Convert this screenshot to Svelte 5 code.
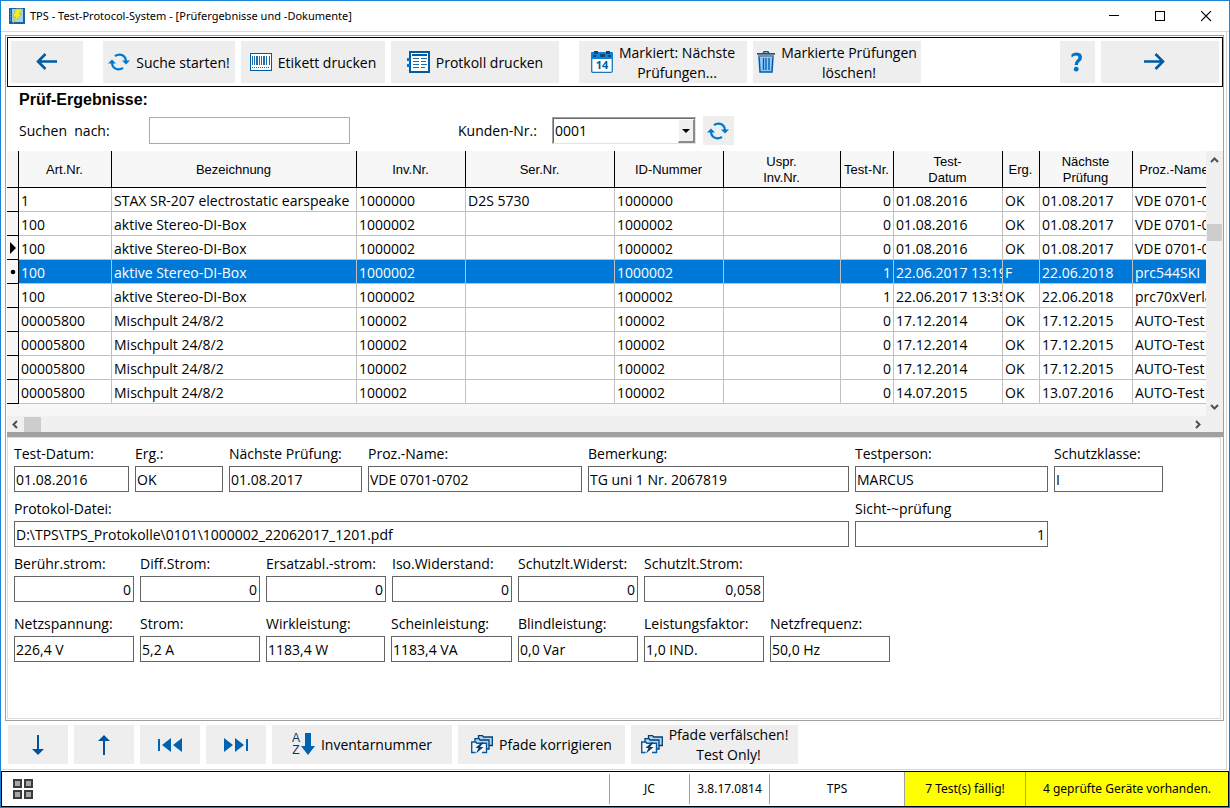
<script>
  const columns = [
    { lines: ['Art.Nr.'], width: 93 },
    { lines: ['Bezeichnung'], width: 245 },
    { lines: ['Inv.Nr.'], width: 109 },
    { lines: ['Ser.Nr.'], width: 149 },
    { lines: ['ID-Nummer'], width: 109 },
    { lines: ['Uspr.', 'Inv.Nr.'], width: 117 },
    { lines: ['Test-Nr.'], width: 53 },
    { lines: ['Test-', 'Datum'], width: 109 },
    { lines: ['Erg.'], width: 37 },
    { lines: ['Nächste', 'Prüfung'], width: 93 },
    { lines: ['Proz.-Name'], width: 84 }
  ];

  const rows = [
    ['1', 'STAX SR-207 electrostatic earspeake', '1000000', 'D2S 5730', '1000000', '', '0', '01.08.2016', 'OK', '01.08.2017', 'VDE 0701-0702'],
    ['100', 'aktive Stereo-DI-Box', '1000002', '', '1000002', '', '0', '01.08.2016', 'OK', '01.08.2017', 'VDE 0701-0702'],
    ['100', 'aktive Stereo-DI-Box', '1000002', '', '1000002', '', '0', '01.08.2016', 'OK', '01.08.2017', 'VDE 0701-0702'],
    ['100', 'aktive Stereo-DI-Box', '1000002', '', '1000002', '', '1', '22.06.2017 13:19', 'F', '22.06.2018', 'prc544SKI'],
    ['100', 'aktive Stereo-DI-Box', '1000002', '', '1000002', '', '1', '22.06.2017 13:35', 'OK', '22.06.2018', 'prc70xVerlä'],
    ['00005800', 'Mischpult 24/8/2', '100002', '', '100002', '', '0', '17.12.2014', 'OK', '17.12.2015', 'AUTO-Test'],
    ['00005800', 'Mischpult 24/8/2', '100002', '', '100002', '', '0', '17.12.2014', 'OK', '17.12.2015', 'AUTO-Test'],
    ['00005800', 'Mischpult 24/8/2', '100002', '', '100002', '', '0', '17.12.2014', 'OK', '17.12.2015', 'AUTO-Test'],
    ['00005800', 'Mischpult 24/8/2', '100002', '', '100002', '', '0', '14.07.2015', 'OK', '13.07.2016', 'AUTO-Test']
  ];
  const current = 2;
  const selected = 3;

  const fieldRows = [
    [
      { label: 'Test-Datum:', value: '01.08.2016', width: 115 },
      { label: 'Erg.:', value: 'OK', width: 88 },
      { label: 'Nächste Prüfung:', value: '01.08.2017', width: 133 },
      { label: 'Proz.-Name:', value: 'VDE 0701-0702', width: 214 },
      { label: 'Bemerkung:', value: 'TG uni 1 Nr. 2067819', width: 261 },
      { label: 'Testperson:', value: 'MARCUS', width: 193 },
      { label: 'Schutzklasse:', value: 'I', width: 109 }
    ],
    [
      { label: 'Protokol-Datei:', value: 'D:\\TPS\\TPS_Protokolle\\0101\\1000002_22062017_1201.pdf', width: 835 },
      { label: 'Sicht-~prüfung', value: '1', width: 193, number: true }
    ],
    [
      { label: 'Berühr.strom:', value: '0', width: 120, number: true },
      { label: 'Diff.Strom:', value: '0', width: 120, number: true },
      { label: 'Ersatzabl.-strom:', value: '0', width: 120, number: true },
      { label: 'Iso.Widerstand:', value: '0', width: 120, number: true },
      { label: 'Schutzlt.Widerst:', value: '0', width: 120, number: true },
      { label: 'Schutzlt.Strom:', value: '0,058', width: 120, number: true }
    ],
    [
      { label: 'Netzspannung:', value: '226,4 V', width: 120 },
      { label: 'Strom:', value: '5,2 A', width: 120 },
      { label: 'Wirkleistung:', value: '1183,4 W', width: 119 },
      { label: 'Scheinleistung:', value: '1183,4 VA', width: 121 },
      { label: 'Blindleistung:', value: '0,0 Var', width: 120 },
      { label: 'Leistungsfaktor:', value: '1,0 IND.', width: 120 },
      { label: 'Netzfrequenz:', value: '50,0 Hz', width: 120 }
    ]
  ];
</script>

{#snippet refreshIcon()}
  <svg width="22" height="18" viewBox="0 0 22 18" aria-hidden="true">
    <path d="M7 3.200Q9 1.600 12 1.700 17.800 2.500 18 8.500M15 14.800Q13 16.400 10 16.300 4.200 15.500 4 9.500" fill="none" stroke="#0078d0" stroke-width="2.200" />
    <path d="M14 7.500h8L18 11.500zM8 10.500H0L4 6.500z" fill="#0078d0" />
  </svg>
{/snippet}

{#snippet foldersIcon()}
  <svg width="22" height="19" viewBox="0 0 22 19" aria-hidden="true">
    <path d="M7.500 5V.700h4l1 1.300h8.800v8.500H18" fill="#b9d6ee" stroke="#003e73" stroke-width="1.300" />
    <path d="M4 8V3.700h4l1 1.300h9v9h-2.500" fill="#b9d6ee" stroke="#003e73" stroke-width="1.300" />
    <path d="M4.500 17.500H.7V7h4l1 1.200h9.800v9.300H11" fill="#f4f6f8" stroke="#005ba5" stroke-width="1.400" />
    <path d="M10.500 7.500L4.500 13h3l-2.500 5.500 7.500-6.500H9l3.500-4.500z" fill="#003e73" />
  </svg>
{/snippet}

<div class="window">
  <header class="titlebar">
    <svg width="16" height="16" viewBox="0 0 16 16" aria-hidden="true">
      <path d="M0 0h16v16H0z" fill="#1464a5" />
      <path d="M3 1h11v13H3z" fill="#a5d0ea" />
      <path d="M1 3h1M1 6h1M1 9h1M1 12h1" stroke="#8fc4e8" />
      <path d="M7 1h6l-3 5h3L4 15l3-6H4z" fill="#f5ee1d" stroke="#b2b637" stroke-width=".6" />
    </svg>
    <span class="title">TPS - Test-Protocol-System - [Prüfergebnisse und -Dokumente]</span>
    <button class="winbtn" aria-label="Minimieren"><svg width="11" height="11" shape-rendering="crispEdges"><path d="M0 4.500h10" stroke="#000" /></svg></button>
    <button class="winbtn" aria-label="Maximieren"><svg width="11" height="11" shape-rendering="crispEdges"><path d="M.5.500h9v9h-9z" fill="none" stroke="#000" /></svg></button>
    <button class="winbtn" aria-label="Schließen"><svg width="11" height="11"><path d="M0 0l10 10M10 0L0 10" stroke="#000" stroke-width="1.100" /></svg></button>
  </header>

  <div class="client">
    <main class="form">
      <nav class="toolbar">
        <button class="tool back" aria-label="Zurück">
          <svg width="22" height="18" viewBox="0 0 22 18"><path d="M9.500 1L2 8.500l7.500 7.500M2 8.500h19" fill="none" stroke="#005ba5" stroke-width="2.600" /></svg>
        </button>
        <button class="tool search">{@render refreshIcon()}<span>Suche starten!</span></button>
        <button class="tool label">
          <svg width="22" height="18" viewBox="0 0 22 18" shape-rendering="crispEdges" aria-hidden="true">
            <path d="M.5.500h21v17H.5z" fill="#fff" stroke="#005ba5" />
            <path d="M2.500 3v9M4.500 3v9M7.500 3v9M9.500 3v9M11.500 3v9M14.500 3v9M16.500 3v9M19.500 3v9" stroke="#1c6db0" />
            <path d="M6.500 3v9M13.500 3v9" stroke="#1c6db0" />
            <path d="M2 14.500h18" stroke="#3d5f7c" stroke-dasharray="1 1" />
          </svg>
          <span>Etikett drucken</span>
        </button>
        <button class="tool wide">
          <svg width="23" height="22" viewBox="0 0 23 22" shape-rendering="crispEdges" aria-hidden="true">
            <path d="M3 1h19v20H3z" fill="#fff" stroke="#005ba5" stroke-width="2" />
            <path d="M5 3h15v2H5z" fill="#005ba5" />
            <path d="M6 7.500h6M14 7.500h6M6 10.500h6M14 10.500h5M6 13.500h6M14 13.500h6M6 16.500h6M14 16.500h4" stroke="#1c6db0" />
            <path d="M0 7h3v3H0zM0 13h3v3H0z" fill="#0078d0" />
          </svg>
          <span>Protkoll drucken</span>
        </button>
        <button class="tool wide spaced">
          <svg width="22" height="22" viewBox="0 0 22 22" aria-hidden="true">
            <path d="M.700 7h20.600v13q0 1.300-1.300 1.300H2Q.700 21.300.700 20z" fill="#fff" stroke="#1c76bd" stroke-width="1.300" />
            <path d="M1 1h20q1 0 1 1v6H0V2q0-1 1-1z" fill="#0a83dc" />
            <path d="M3 0h4v3H3zM15 0h4v3h-4zM9 3h5v3H9zM2 4h3v2H2zM17 4h3v2h-3z" fill="#1d4468" />
            <text x="11" y="18" text-anchor="middle" font-size="11" font-weight="700" fill="#005ba5">14</text>
          </svg>
          <span>Markiert: Nächste<br />Prüfungen...</span>
        </button>
        <button class="tool wide">
          <svg width="18" height="22" viewBox="0 0 18 22" aria-hidden="true">
            <path d="M2 5h14l-1 16H3z" fill="#8ccbff" stroke="#005ba5" stroke-width="1.500" />
            <path d="M6.500 7v12M9 7v12M12 7v12" stroke="#005ba5" stroke-width="1.300" />
            <path d="M6 2.500l1-1.800h4l1 1.800" fill="none" stroke="#005ba5" stroke-width="1.400" />
            <path d="M0 2h18v1.700H0z" fill="#005ba5" />
            <path d="M2 3.700h14V6H2z" fill="#8a8a8a" />
          </svg>
          <span>Markierte Prüfungen<br />löschen!</span>
        </button>
        <span class="spring"></span>
        <button class="tool help" aria-label="Hilfe">
          <svg width="12" height="20" viewBox="0 0 12 20"><path d="M.5 5.500V2.200Q2.500.5 5.500.500q5.500.2 5.500 5 0 2.500-2.500 4.200-1.700 1.200-1.700 3.300H3.600q0-3 2-4.800 1.900-1.500 1.900-2.700 0-2-2.200-2Q2.500 3.500.5 5.500z" fill="#0071c5" /><circle cx="5.200" cy="17.200" r="2.400" fill="#0071c5" /></svg>
        </button>
        <button class="tool next" aria-label="Weiter">
          <svg width="22" height="18" viewBox="0 0 22 18"><path d="M12.500 1l7.500 7.500-7.500 7.500M20 8.500H1" fill="none" stroke="#005ba5" stroke-width="2.600" /></svg>
        </button>
      </nav>

      <h1>Prüf-Ergebnisse:</h1>
      <div class="filter">
        <label class="find" for="suche">Suchen  nach:</label>
        <input class="query" id="suche" type="text" />
        <label class="customer" for="kunde">Kunden-Nr.:</label>
        <div class="combo">
          <select id="kunde"><option>0001</option></select>
          <span class="drop"></span>
        </div>
        <button class="reload" aria-label="Aktualisieren">{@render refreshIcon()}</button>
      </div>

      <section class="grid">
        <div class="sheet">
          <table>
            <colgroup>
              <col style:width="12px" />
              {#each columns as c}<col style:width="{c.width}px" />{/each}
            </colgroup>
            <thead>
              <tr>
                <th class="mark"></th>
                {#each columns as c}
                  <th>{#each c.lines as line}<div>{line}</div>{/each}</th>
                {/each}
              </tr>
            </thead>
            <tbody>
              {#each rows as row, r}
                <tr class:selected={r === selected}>
                  <th class="mark">
                    {#if r === current}<svg width="6" height="12"><path d="M0 0l6 6-6 6z" /></svg>{/if}
                    {#if r === selected}<svg width="6" height="6"><circle cx="3" cy="3" r="2.300" /></svg>{/if}
                  </th>
                  {#each row as cell, i}<td class:number={i === 6}>{cell}</td>{/each}
                </tr>
              {/each}
            </tbody>
          </table>
        </div>
        <div class="vscroll">
          <svg width="9" height="6"><path d="M1 5l3.500-3.500L8 5" /></svg>
          <span class="thumb"></span>
          <svg width="9" height="6"><path d="M1 1l3.500 3.500L8 1" /></svg>
        </div>
        <div class="hscroll">
          <svg width="6" height="9"><path d="M5 1L1.500 4.500 5 8" /></svg>
          <span class="thumb"></span>
          <svg width="6" height="9"><path d="M1 1l3.500 3.500L1 8" /></svg>
        </div>
      </section>

      <section class="details">
        {#each fieldRows as fields, r}
          <div class="fields">
            {#each fields as f, i}
              <div class="field" style:width="{f.width}px">
                <label for="feld-{r}-{i}">{f.label}</label>
                <input id="feld-{r}-{i}" class:number={f.number} type="text" value={f.value} />
              </div>
            {/each}
          </div>
        {/each}
      </section>
    </main>

    <nav class="bottombar">
      <button class="tool step" aria-label="Abwärts"><svg width="12" height="20"><path d="M6 0v16" stroke="#00529b" stroke-width="2" /><path d="M0 14h12l-6 6z" fill="#00529b" /></svg></button>
      <button class="tool step" aria-label="Aufwärts"><svg width="12" height="20"><path d="M6 4v16" stroke="#00529b" stroke-width="2" /><path d="M0 6h12L6 0z" fill="#00529b" /></svg></button>
      <button class="tool step" aria-label="Erster Datensatz"><svg width="24" height="14"><path d="M0 1h2v12H0zM13 0v14L4 7zM24 0v14L15 7z" fill="#0063b1" /></svg></button>
      <button class="tool step" aria-label="Letzter Datensatz"><svg width="24" height="14"><path d="M22 1h2v12h-2zM0 0v14l9-7zM11 0v14l9-7z" fill="#0063b1" /></svg></button>
      <button class="tool sort">
        <svg class="az" width="23" height="23" viewBox="0 0 23 23" aria-hidden="true">
          <text x="4" y="9" text-anchor="middle" font-size="12" fill="#003a6b">A</text>
          <text x="4" y="21" text-anchor="middle" font-size="12" fill="#003a6b">Z</text>
          <path d="M13 0h6v13h4l-7 9-7-9h4z" fill="#0063b1" />
        </svg>
        <span>Inventarnummer</span>
      </button>
      <button class="tool paths">{@render foldersIcon()}<span>Pfade korrigieren</span></button>
      <button class="tool paths">{@render foldersIcon()}<span>Pfade verfälschen!<br />Test Only!</span></button>
    </nav>
  </div>

  <footer class="status">
    <div class="tiles">
      <svg width="20" height="20" viewBox="0 0 20 20" shape-rendering="crispEdges" aria-hidden="true">
        <path d="M1 1h7v7H1zM12 1h7v7h-7zM1 12h7v7H1zM12 12h7v7h-7z" fill="#a6a6a6" stroke="#3c3c3c" stroke-width="2" />
      </svg>
    </div>
    <div class="cell user">JC</div>
    <div class="cell user">3.8.17.0814</div>
    <div class="cell app">TPS</div>
    <div class="cell due">7 Test(s) fällig!</div>
    <div class="cell tested">4 geprüfte Geräte vorhanden.</div>
  </footer>
</div>

<style>
  :global(body) {
    margin: 0;
  }
  .window,
  .window * {
    box-sizing: border-box;
  }
  .window {
    display: flex;
    flex-direction: column;
    min-height: 100vh;
    border: 1px solid #1883d7;
    background: #fff;
    color: #000;
    font: 14px/20px "Open Sans", "Noto Sans", sans-serif;
  }
  button,
  input,
  select {
    margin: 0;
    padding: 0;
    border: 0;
    border-radius: 0;
    color: inherit;
    font: inherit;
  }
  svg {
    display: block;
    flex: none;
  }

  .titlebar {
    display: flex;
    align-items: center;
    height: 31px;
    padding-left: 8px;
    border-bottom: 1px solid #d9d9d9;
  }
  .title {
    flex: 1;
    padding-left: 5px;
    font-family: "Noto Sans", sans-serif;
    font-size: 11px;
  }
  .winbtn {
    display: grid;
    place-items: center;
    width: 46px;
    height: 28px;
    background: none;
  }

  .client {
    display: flex;
    flex: 1;
    flex-direction: column;
    margin-right: 2px;
    padding: 3px 2px 5px 4px;
    border-right: 1px solid #d9d9d9;
    border-bottom: 1px solid #d9d9d9;
  }
  .form {
    display: flex;
    flex: 1;
    flex-direction: column;
    padding: 1px 0 1px 1px;
    border: 1px solid #a0a0a0;
  }
  .toolbar {
    display: flex;
    gap: 6px;
    padding: 3px;
    border: 1px solid #000;
  }
  .tool {
    display: flex;
    align-items: center;
    justify-content: center;
    gap: 6px;
    height: 42px;
    background: #eee;
    text-align: center;
    white-space: nowrap;
  }
  .toolbar .tool span {
    padding-top: 2px;
  }
  .back {
    width: 72px;
    margin-right: 14px;
  }
  .search {
    width: 132px;
  }
  .label {
    width: 144px;
  }
  .wide {
    width: 168px;
  }
  .spaced {
    margin-left: 14px;
  }
  .spring {
    flex: 1;
  }
  .help {
    width: 35px;
    padding-right: 2px;
  }
  .next {
    width: 118px;
    padding-right: 12px;
  }

  h1 {
    margin: 3px 0 6px 12px;
    font: bold 16px/20px "Liberation Sans", Arial, sans-serif;
  }
  .filter {
    display: flex;
    align-items: center;
    height: 29px;
    margin-bottom: 6px;
    padding-left: 12px;
  }
  .find {
    width: 130px;
    white-space: pre;
  }
  .query {
    width: 201px;
    height: 27px;
    padding: 0 3px;
    border: 1px solid #a9a9ae;
  }
  .customer {
    width: 94px;
    margin-left: 108px;
  }
  .combo {
    position: relative;
    width: 144px;
    height: 27px;
    border: 1px solid #a0a0a0;
    border-right-color: #e3e3e3;
    border-bottom-color: #e3e3e3;
  }
  .combo select {
    width: 100%;
    height: 100%;
    padding-left: 1px;
    border: 1px solid #696969;
    border-right: 0;
    border-bottom: 0;
    background: #fff;
    appearance: none;
  }
  .drop {
    position: absolute;
    top: 1px;
    right: 0;
    bottom: 0;
    width: 17px;
    border: solid;
    border-width: 1px 2px 2px 1px;
    border-color: #fff #8a8a8a #8a8a8a #fff;
    background: #f0f0f0;
    pointer-events: none;
  }
  .drop::before {
    position: absolute;
    top: 9px;
    left: 3px;
    border: solid transparent;
    border-width: 4px 4px 0;
    border-top-color: #000;
    content: "";
  }
  .reload {
    display: grid;
    place-items: center;
    width: 31px;
    height: 29px;
    margin-left: 7px;
    padding-right: 1px;
    background: #eee;
  }

  .grid {
    display: grid;
    grid-template-columns: minmax(0, 1fr) 17px;
    border-bottom: 5px solid #a0a0a0;
  }
  .sheet {
    overflow: hidden;
    padding-bottom: 12px;
    background: #f7f7f7;
  }
  table {
    width: 1210px;
    min-width: 100%;
    border-collapse: separate;
    border-spacing: 0;
    table-layout: fixed;
    background: #fff;
  }
  thead th {
    height: 37px;
    padding: 2px 1px 0 0;
    border-right: 1px solid #000;
    border-bottom: 1px solid #000;
    background: #f7f7f7;
    font: 13px/16px "Liberation Sans", Arial, sans-serif;
  }
  .mark {
    padding: 0 0 0 3px;
    border-right: 1px solid #000;
    border-bottom: 1px solid #000;
    background: #f7f7f7;
  }
  td {
    overflow: hidden;
    height: 24px;
    padding: 3px 0 0 2px;
    border-right: 1px solid #c0c0c0;
    border-bottom: 1px solid #c0c0c0;
    line-height: 20px;
    white-space: nowrap;
  }
  td.number {
    padding-right: 2px;
    text-align: right;
  }
  .selected td {
    background: #0078d7;
    color: #fff;
  }
  .vscroll,
  .hscroll {
    display: flex;
    align-items: center;
    background: #f0f0f0;
  }
  .vscroll path,
  .hscroll path {
    fill: none;
    stroke: #505050;
    stroke-width: 2;
  }
  .thumb {
    background: #cdcdcd;
  }
  .vscroll {
    flex-direction: column;
    padding: 6px 1px 6px 0;
  }
  .vscroll .thumb {
    width: 15px;
    height: 17px;
    margin: 61px 0 auto;
  }
  .hscroll {
    grid-column: 1 / -1;
    height: 16px;
    padding: 0 22px 0 5px;
  }
  .hscroll .thumb {
    width: 17px;
    height: 15px;
    margin: 0 auto 0 6px;
  }

  .details {
    display: flex;
    flex: 1;
    flex-direction: column;
    gap: 7px;
    margin-right: 2px;
    padding: 6px;
    border: 1px solid #dcdcdc;
  }
  .fields {
    display: flex;
    gap: 6px;
  }
  .fields:last-child {
    margin-top: 5px;
  }
  .field {
    display: flex;
    flex-direction: column;
    gap: 4px;
  }
  .field label {
    height: 18px;
    white-space: nowrap;
  }
  .field input {
    width: 100%;
    height: 26px;
    padding: 0 1px;
    border: 1px solid #646464;
  }
  .fields .number {
    padding-right: 2px;
    text-align: right;
  }

  .bottombar {
    display: flex;
    gap: 6px;
    padding: 4px 3px 0;
  }
  .bottombar .tool {
    height: 39px;
  }
  .bottombar .step {
    width: 60px;
  }
  .bottombar .sort {
    width: 180px;
  }
  .az {
    overflow: visible;
    font-family: "Liberation Sans", Arial, sans-serif;
  }
  .bottombar .paths {
    width: 167px;
  }

  .status {
    display: flex;
    height: 36px;
    margin-top: 1px;
    padding: 2px 0;
    border: 1px solid #000;
    font-family: "Noto Sans", sans-serif;
    font-size: 12px;
  }
  .tiles {
    display: flex;
    flex: 1;
    align-items: center;
    padding-left: 11px;
  }
  .cell {
    display: flex;
    align-items: center;
    justify-content: center;
    border-left: 1px solid #a0a0a0;
    white-space: nowrap;
  }
  .user {
    width: 80px;
  }
  .app {
    width: 135px;
  }
  .due,
  .tested {
    margin: -2px 0;
    background: #ff0;
  }
  .due {
    width: 121px;
  }
  .tested {
    width: 203px;
  }
</style>
